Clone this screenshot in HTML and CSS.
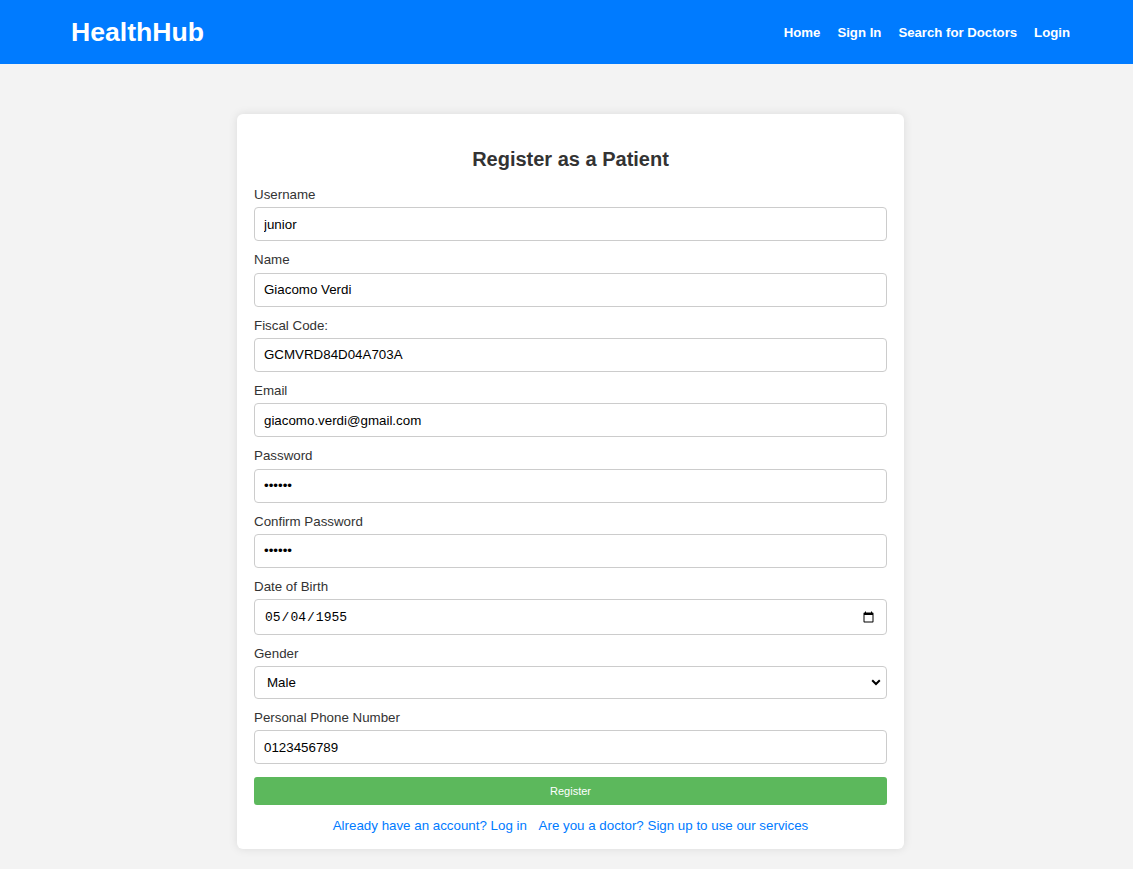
FILE: index.html
```html
<!DOCTYPE html>
<html lang="en">
<head>
<meta charset="utf-8">
<title>HealthHub - Register</title>
<link rel="stylesheet" href="styles.css">
</head>
<body>
<header class="topbar">
  <div class="logo">HealthHub</div>
  <nav class="nav">
    <a href="#">Home</a>
    <a href="#">Sign In</a>
    <a href="#">Search for Doctors</a>
    <a href="#">Login</a>
  </nav>
</header>
<main class="page">
  <form class="card">
    <h2 class="title">Register as a Patient</h2>
    <div class="group">
      <label class="label">Username</label>
      <input class="field" type="text" value="junior">
    </div>
    <div class="group">
      <label class="label">Name</label>
      <input class="field" type="text" value="Giacomo Verdi">
    </div>
    <div class="group">
      <label class="label">Fiscal Code:</label>
      <input class="field" type="text" value="GCMVRD84D04A703A">
    </div>
    <div class="group">
      <label class="label">Email</label>
      <input class="field" type="text" value="giacomo.verdi@gmail.com">
    </div>
    <div class="group">
      <label class="label">Password</label>
      <input class="field" type="password" value="123456">
    </div>
    <div class="group">
      <label class="label">Confirm Password</label>
      <input class="field" type="password" value="123456">
    </div>
    <div class="group">
      <label class="label">Date of Birth</label>
      <input class="field date" type="date" value="1955-05-04">
    </div>
    <div class="group">
      <label class="label">Gender</label>
      <div class="select-wrap">
        <select class="field select">
          <option>Male</option>
          <option>Female</option>
        </select>
        <svg class="chev" width="10" height="7" viewBox="0 0 10 7"><path d="M1.2 1.3 L5 5 L8.8 1.3" fill="none" stroke="#000" stroke-width="2"/></svg>
      </div>
    </div>
    <div class="group">
      <label class="label">Personal Phone Number</label>
      <input class="field" type="text" value="0123456789">
    </div>
    <button class="btn" type="button">Register</button>
    <div class="links">
      <a href="#">Already have an account? Log in</a>
      <a href="#">Are you a doctor? Sign up to use our services</a>
    </div>
  </form>
</main>
</body>
</html>
```

FILE: styles.css
```css
* { box-sizing: border-box; }
html, body {
  margin: 0;
  padding: 0;
}
body {
  background: #f3f3f3;
  font-family: "Liberation Sans", Arial, sans-serif;
  color: #333;
  font-size: 13.33px;
}
.topbar {
  height: 64px;
  background: #007bff;
  display: flex;
  align-items: center;
  justify-content: space-between;
  padding: 0 63px 0 71px;
}
.logo {
  color: #fff;
  font-weight: bold;
  font-size: 26.6px;
  line-height: 1;
}
.nav {
  display: flex;
  gap: 17px;
}
.nav a {
  color: #fff;
  font-weight: bold;
  text-decoration: none;
  font-size: 13.2px;
}
.page {
  display: flex;
  justify-content: center;
  padding: 50px 0 20px 8px;
}
.card {
  width: 667px;
  background: #fff;
  border-radius: 6px;
  box-shadow: 0 0 10px rgba(0, 0, 0, 0.1);
  padding: 17px 17px 16px;
}
.title {
  margin: 17px 0 16px;
  text-align: center;
  font-size: 20px;
  line-height: 23px;
  color: #333;
}
.group {
  margin-bottom: 11px;
}
.label {
  display: block;
  font-size: 13.33px;
  line-height: 15.33px;
  margin-bottom: 5px;
  color: #333;
}
.field {
  display: block;
  width: 100%;
  height: 34px;
  padding: 0 9px;
  border: 1px solid #ccc;
  border-radius: 4px;
  font-family: "Liberation Sans", Arial, sans-serif;
  font-size: 13.33px;
  color: #000;
  background: #fff;
  outline: none;
}
.date {
  height: 35.5px;
  font-family: "Liberation Mono", "DejaVu Sans Mono", monospace;
  font-size: 13px;
}
.select-wrap {
  position: relative;
}
.select {
  height: 33px;
  padding-left: 12px;
  appearance: none;
  -webkit-appearance: none;
}
.chev {
  position: absolute;
  right: 6px;
  top: 13px;
  pointer-events: none;
}
.btn {
  display: block;
  width: 100%;
  height: 28px;
  margin-top: 12.2px;
  background: #5cb85c;
  color: #fff;
  border: none;
  border-radius: 3px;
  font-family: "Liberation Sans", Arial, sans-serif;
  font-size: 11px;
}
.links {
  margin-top: 13.3px;
  text-align: center;
  line-height: 15.33px;
}
.links a {
  color: #007bff;
  text-decoration: none;
  margin: 0 4px;
  font-size: 13.33px;
}
```
